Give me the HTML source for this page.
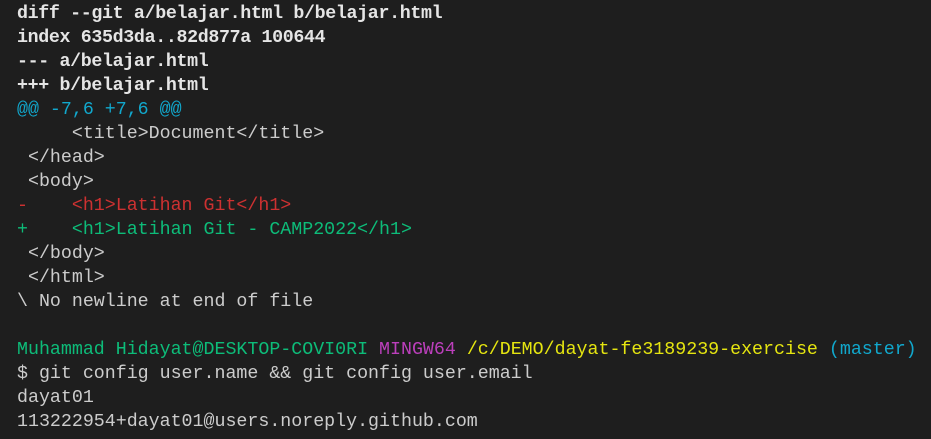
<!DOCTYPE html>
<html><head><style>
html,body{margin:0;padding:0;background:#1e1e1e;width:931px;height:439px;overflow:hidden}
pre{margin:0;padding:2px 0 0 17px;font-family:"Liberation Mono",monospace;font-size:18.3px;line-height:24px;color:#cccccc;white-space:pre}
.b{font-weight:bold;color:#e5e5e5;letter-spacing:-0.34px}
.c{color:#11a8cd}.r{color:#cd3131}.g{color:#0dbc79}.m{color:#bc3fbc}.y{color:#e5e510}
</style></head><body><pre><span class="b">diff --git a/belajar.html b/belajar.html</span>
<span class="b">index 635d3da..82d877a 100644</span>
<span class="b">--- a/belajar.html</span>
<span class="b">+++ b/belajar.html</span>
<span class="c">@@ -7,6 +7,6 @@</span>
     &lt;title&gt;Document&lt;/title&gt;
 &lt;/head&gt;
 &lt;body&gt;
<span class="r">-    &lt;h1&gt;Latihan Git&lt;/h1&gt;</span>
<span class="g">+    &lt;h1&gt;Latihan Git - CAMP2022&lt;/h1&gt;</span>
 &lt;/body&gt;
 &lt;/html&gt;
\ No newline at end of file

<span class="g">Muhammad Hidayat@DESKTOP-COVI0RI</span> <span class="m">MINGW64</span> <span class="y">/c/DEMO/dayat-fe3189239-exercise</span> <span class="c">(master)</span>
$ git config user.name &amp;&amp; git config user.email
dayat01
113222954+dayat01@users.noreply.github.com
</pre></body></html>
